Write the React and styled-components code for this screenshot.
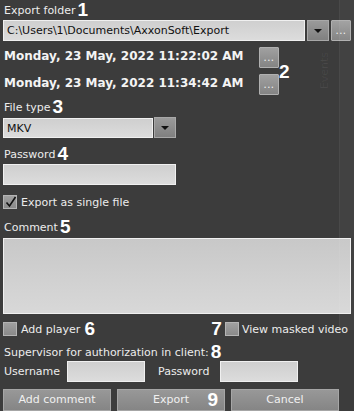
import React from "react";
import styled, { createGlobalStyle } from "styled-components";

const Global = createGlobalStyle`
  html, body { margin: 0; padding: 0; background: #3c3c3c; }
  body { width: 354px; height: 411px; overflow: hidden; font-family: "DejaVu Sans", Verdana, sans-serif; }
`;

const Panel = styled.div`
  position: relative;
  width: 354px;
  height: 411px;
  box-sizing: border-box;
  padding: 0 3px 0 3px;
  background: #3c3c3c;
  color: #ececec;
  font-size: 11px;
  display: flex;
  flex-direction: column;
`;

const Ghost = styled.div`
  position: absolute;
  right: 0;
  top: 0;
  width: 14px;
  height: 330px;
  background: rgba(255,255,255,0.03);
  border-left: 1px solid rgba(255,255,255,0.04);
`;

const GhostText = styled.div`
  position: absolute;
  left: 318px;
  top: 52px;
  writing-mode: vertical-rl;
  transform: rotate(180deg);
  font-size: 11px;
  color: rgba(255,255,255,0.06);
`;

const Label = styled.div`
  display: flex;
  align-items: flex-end;
  gap: 2px;
  height: 16px;
  line-height: 14px;
  margin-top: ${p => p.$mt || 0}px;
  padding-left: 1px;
  white-space: nowrap;
`;

const Num = styled.span`
  font-family: "Liberation Sans", Arial, sans-serif;
  font-weight: bold;
  font-size: 19px;
  line-height: 16px;
  color: #ffffff;
`;

const Row = styled.div`
  display: flex;
  align-items: center;
  gap: ${p => p.$gap || 0}px;
  margin-top: ${p => p.$mt || 0}px;
  height: ${p => p.$h || 21}px;
`;

const Input = styled.div`
  box-sizing: border-box;
  width: ${p => p.$w ? p.$w + "px" : "auto"};
  flex: ${p => p.$w ? "none" : 1};
  height: ${p => p.$h || 21}px;
  background: linear-gradient(#cfcfcf, #dcdcdc);
  border: 1px solid #f0f0f0;
  color: #111;
  font-size: 11px;
  line-height: 19px;
  padding-left: 3px;
  white-space: nowrap;
  overflow: hidden;
`;

const DropBtn = styled.div`
  box-sizing: border-box;
  width: ${p => p.$w || 22}px;
  height: 21px;
  background: linear-gradient(#9a9a9a, #808080);
  border: 1px solid #a8a8a8;
  display: flex;
  align-items: center;
  justify-content: center;
  flex: none;
  &::after {
    content: "";
    border-left: 4px solid transparent;
    border-right: 4px solid transparent;
    border-top: 4px solid #111;
  }
`;

const DotsBtn = styled.div`
  box-sizing: border-box;
  width: ${p => p.$w || 20}px;
  height: ${p => p.$h || 21}px;
  background: linear-gradient(#a0a0a0, #848484);
  border: 1px solid #b0b0b0;
  border-radius: 1px;
  color: #f4f4f4;
  font-size: 10px;
  line-height: 19px;
  letter-spacing: 0.5px;
  text-align: center;
  flex: none;
`;

const DateBlock = styled.div`
  position: relative;
  display: flex;
  flex-direction: column;
  gap: 6px;
  margin-top: 6px;
`;

const DateRow = styled.div`
  display: flex;
  align-items: center;
  height: 21px;
`;

const DateText = styled.div`
  font-weight: bold;
  font-size: 12px;
  width: 255px;
  padding-left: 1px;
  padding-bottom: 4px;
  white-space: nowrap;
  color: #f4f4f4;
`;

const FloatNum = styled(Num)`
  position: absolute;
  left: 276px;
  top: 17px;
`;

const Check = styled.div`
  box-sizing: border-box;
  width: 14px;
  height: 14px;
  background: linear-gradient(#a0a0a0, #8a8a8a);
  border: 1px solid #b4b4b4;
  position: relative;
  flex: none;
`;

const Tick = styled.svg`
  position: absolute;
  left: 1px;
  top: 0px;
`;

const TextArea = styled.div`
  box-sizing: border-box;
  height: 77px;
  margin-top: 3px;
  background: linear-gradient(#c8c8c8, #d8d8d8);
  border: 1px solid #f0f0f0;
`;

const SplitRow = styled.div`
  display: flex;
  align-items: center;
  justify-content: space-between;
  margin-top: 8px;
  height: 14px;
  padding-right: 3px;
`;

const Group = styled.div`
  display: flex;
  align-items: center;
  gap: ${p => p.$gap || 3}px;
  white-space: nowrap;
`;

const FieldLabel = styled.span`
  box-sizing: border-box;
  width: ${p => p.$w}px;
  padding-left: ${p => p.$pl || 1}px;
  flex: none;
  white-space: nowrap;
`;

const Buttons = styled.div`
  display: grid;
  grid-template-columns: 108px 108px 108px;
  column-gap: 6px;
  margin-top: 7px;
`;

const Button = styled.div`
  position: relative;
  box-sizing: border-box;
  height: 22px;
  background: linear-gradient(#989898, #858585);
  border: 1px solid #a6a6a6;
  color: #f0f0f0;
  font-size: 11px;
  line-height: 20px;
  text-align: center;
`;

const BtnNum = styled(Num)`
  position: absolute;
  right: 6px;
  top: 2px;
`;

export default function App() {
  return (
    <>
      <Global />
      <Panel>
        <Ghost />
        <GhostText>Events</GhostText>
        <Label $mt={2}>Export folder<Num>1</Num></Label>
        <Row $mt={2} $gap={2}>
          <Input>C:\Users\1\Documents\AxxonSoft\Export</Input>
          <DropBtn />
          <DotsBtn>...</DotsBtn>
        </Row>
        <DateBlock>
          <DateRow>
            <DateText>Monday, 23 May, 2022 11:22:02 AM</DateText>
            <DotsBtn>...</DotsBtn>
          </DateRow>
          <DateRow>
            <DateText>Monday, 23 May, 2022 11:34:42 AM</DateText>
            <DotsBtn>...</DotsBtn>
          </DateRow>
          <FloatNum>2</FloatNum>
        </DateBlock>
        <Label $mt={4}>File type<Num>3</Num></Label>
        <Row $mt={2} $gap={1}>
          <Input $w={150} $h={20}>MKV</Input>
          <DropBtn />
        </Row>
        <Label $mt={8}>Password<Num>4</Num></Label>
        <Row $mt={2}>
          <Input $w={173} $h={21} />
        </Row>
        <Row $mt={10} $h={14} $gap={4}>
          <Check>
            <Tick width="12" height="12" viewBox="0 0 12 12">
              <path d="M1.5 6.5 L4.5 10 L10.5 1" fill="none" stroke="#111" strokeWidth="1.6" />
            </Tick>
          </Check>
          <span>Export as single file</span>
        </Row>
        <Label $mt={10}>Comment<Num>5</Num></Label>
        <TextArea />
        <SplitRow>
          <Group $gap={4}>
            <Check />
            <span>Add player</span>
            <Num>6</Num>
          </Group>
          <Group $gap={3}>
            <Num>7</Num>
            <Check />
            <span>View masked video</span>
          </Group>
        </SplitRow>
        <Label $mt={8}>Supervisor for authorization in client:<Num>8</Num></Label>
        <Row $mt={1}>
          <FieldLabel $w={64}>Username</FieldLabel>
          <Input $w={78} />
          <FieldLabel $w={75} $pl={13}>Password</FieldLabel>
          <Input $w={78} />
        </Row>
        <Buttons>
          <Button>Add comment</Button>
          <Button>Export<BtnNum>9</BtnNum></Button>
          <Button>Cancel</Button>
        </Buttons>
      </Panel>
    </>
  );
}
